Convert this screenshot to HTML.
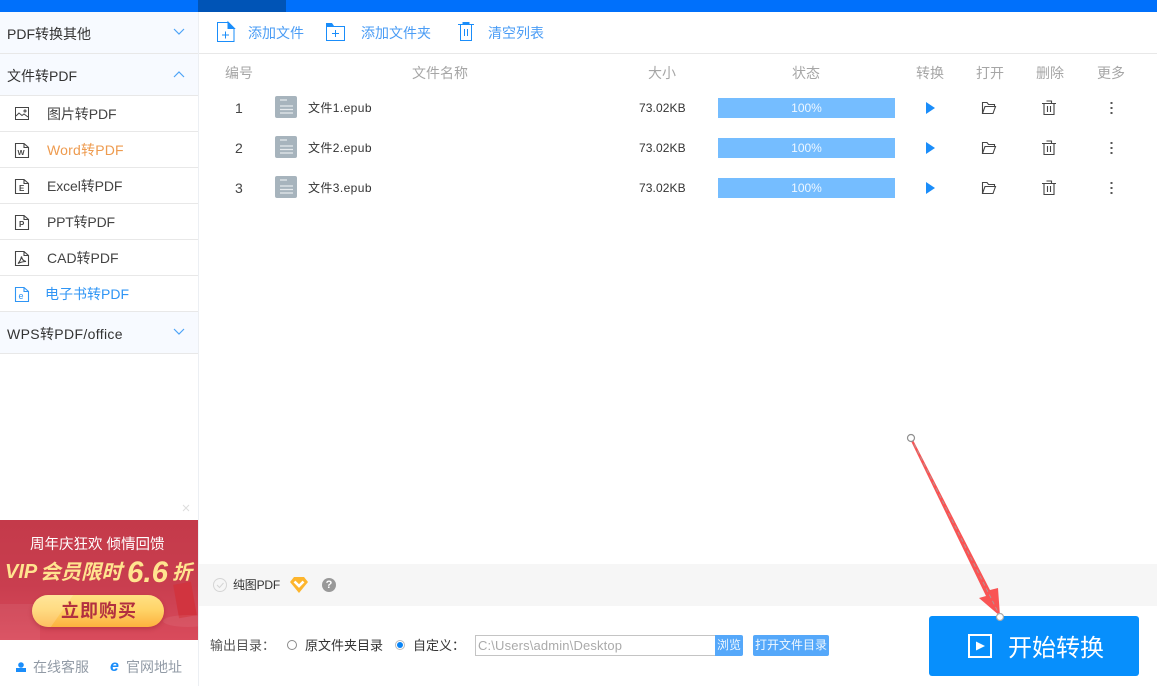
<!DOCTYPE html>
<html lang="zh"><head><meta charset="utf-8"><title>PDF转换</title>
<style>
*{box-sizing:border-box;margin:0;padding:0}
html,body{width:1157px;height:686px;overflow:hidden;background:#fff}
body{position:relative;font-family:"Liberation Sans","Noto Sans CJK SC",sans-serif;color:#333;font-size:14px}
.a{position:absolute;white-space:nowrap}
.sh{position:absolute;left:0;width:198px;height:42px;background:#f7faff;border-bottom:1px solid #e8e8e8}
.sh span{position:absolute;left:7px;top:12px;font-size:14px;line-height:20px;color:#333}
.si{position:absolute;left:0;width:198px;height:36px;background:#fff;border-bottom:1px solid #e8e8e8}
.si span{position:absolute;left:47px;top:9px;font-size:14px;line-height:18px;color:#444}
.si svg{position:absolute;left:15px;top:11px}
.h{position:absolute;top:64px;font-size:14px;line-height:18px;color:#a6a6a6;transform:translateX(-50%);white-space:nowrap}
.t{position:absolute;font-size:12px;line-height:16px;color:#333;white-space:nowrap}
.f{letter-spacing:.4px}
.bar{position:absolute;left:718px;width:177px;height:20px;background:#75bdff;color:#eef7ff;font-size:12px;line-height:21px;text-align:center}
.tb{position:absolute;top:24px;font-size:14px;line-height:18px;color:#4a9cf5;white-space:nowrap}
svg{position:absolute;overflow:visible}
</style></head><body>
<div class="a" style="left:0;top:0;width:1157px;height:12px;background:#0070fb"></div>
<div class="a" style="left:198px;top:0;width:88px;height:12px;background:#0054b6"></div>
<div class="a" style="left:198px;top:12px;width:1px;height:674px;background:#eceff3"></div>

<div class="sh" style="top:12px"><span>PDF转换其他</span></div>
<svg style="left:173px;top:28px" width="12" height="8" fill="none" stroke="#4da3f7" stroke-width="1.2"><path d="M1 1l5 5 5-5"/></svg>
<div class="sh" style="top:54px"><span>文件转PDF</span></div>
<svg style="left:173px;top:70px" width="12" height="8" fill="none" stroke="#4da3f7" stroke-width="1.2"><path d="M1 7l5-5 5 5"/></svg>

<div class="si" style="top:96px"><svg width="14" height="14" fill="none" stroke="#444" stroke-width="1"><rect x=".5" y=".5" width="13" height="12"/><path d="M1 9l3-3 3 2.500 2-1.500 4 3"/><circle cx="10" cy="4" r="1"/></svg><span style="letter-spacing:-.1px">图片转PDF</span></div>
<div class="si" style="top:132px"><svg width="14" height="15" fill="none" stroke="#444" stroke-width="1.100"><path d="M.5.500h8.500l4.500 4v10h-13zM9 .5v4h4.500"/><text x="2.500" y="12" font-size="7.500" font-weight="700" fill="#444" stroke="none" font-family="Liberation Sans">W</text></svg><span style="color:#ee9b4f;letter-spacing:.2px">Word转PDF</span></div>
<div class="si" style="top:168px"><svg width="14" height="15" fill="none" stroke="#444" stroke-width="1.100"><path d="M.5.500h8.500l4.500 4v10h-13zM9 .5v4h4.500"/><text x="4" y="12" font-size="8" font-weight="700" fill="#444" stroke="none" font-family="Liberation Sans">E</text></svg><span style="letter-spacing:-.1px">Excel转PDF</span></div>
<div class="si" style="top:204px"><svg width="14" height="15" fill="none" stroke="#444" stroke-width="1.100"><path d="M.5.500h8.500l4.500 4v10h-13zM9 .5v4h4.500"/><text x="4" y="12" font-size="8" font-weight="700" fill="#444" stroke="none" font-family="Liberation Sans">P</text></svg><span style="letter-spacing:-.2px">PPT转PDF</span></div>
<div class="si" style="top:240px"><svg width="14" height="15" fill="none" stroke="#444" stroke-width="1.100"><path d="M.5.500h8.500l4.500 4v10h-13zM9 .5v4h4.500M3 12.500c2-2 3-4.500 3.500-7 .5 3 2 4.500 4.500 5-3 0-5 .5-8 2z"/></svg><span>CAD转PDF</span></div>
<div class="si" style="top:276px"><svg width="14" height="15" fill="none" stroke="#2f95f5" stroke-width="1.100"><path d="M.5.500h8.500l4.500 4v10h-13zM9 .5v4h4.500"/><text x="3.500" y="12" font-size="9" fill="#2f95f5" stroke="none" font-family="Liberation Sans">e</text></svg><span style="left:45px;color:#2f95f5">电子书转PDF</span></div>

<div class="sh" style="top:312px"><span style="letter-spacing:.35px">WPS转PDF/office</span></div>
<svg style="left:173px;top:328px" width="12" height="8" fill="none" stroke="#4da3f7" stroke-width="1.2"><path d="M1 1l5 5 5-5"/></svg>

<svg style="left:182px;top:504px" width="8" height="8" stroke="#ddd" stroke-width="1"><path d="M1 1l6 6M7 1l-6 6"/></svg>
<div class="a" style="left:0;top:520px;width:198px;height:120px;overflow:hidden;background:linear-gradient(180deg,#c43a4a 0%,#c93e4f 55%,#d94b5c 100%)">
 <div class="a" style="left:0;top:84px;width:40px;height:36px;background:rgba(255,255,255,.06)"></div>
 <div class="a" style="left:176px;top:63px;width:18px;height:34px;background:#d1343f;transform:rotate(-10deg)"></div>
 <div class="a" style="left:163px;top:95px;width:50px;height:12px;border-radius:50%;background:rgba(255,255,255,.07)"></div>
 <div class="a" style="left:30px;top:15px;font-size:14.500px;line-height:20px;color:#fff">周年庆狂欢 倾情回馈</div>
 <div class="a" style="left:5px;top:39px;font-size:20px;line-height:26px;font-weight:700;font-style:italic;color:#ffe48f">VIP</div>
 <div class="a" style="left:40px;top:40px;font-size:20.500px;line-height:26px;font-weight:700;font-style:italic;color:#ffe48f">会员限时</div>
 <div class="a" style="left:127px;top:38px;font-size:29.500px;line-height:30px;font-weight:700;font-style:italic;color:#ffe48f">6.6</div>
 <div class="a" style="left:172px;top:40px;font-size:20px;line-height:26px;font-weight:700;font-style:italic;color:#ffe48f">折</div>
 <div class="a" style="left:32px;top:75px;width:132px;height:32px;border-radius:16px;overflow:hidden;background:linear-gradient(180deg,#ffe184 0%,#ffd468 45%,#fdb23e 100%);box-shadow:0 2px 4px rgba(130,20,30,.3)">
  <div class="a" style="left:-20px;top:0;width:50px;height:32px;background:rgba(255,255,255,.18);transform:skewX(-35deg)"></div>
  <div class="a" style="left:29px;top:0;font-size:18px;line-height:32px;font-weight:700;color:#b23040;letter-spacing:1px">立即购买</div>
 </div>
</div>
<svg style="left:16px;top:662px" width="10" height="10"><circle cx="5" cy="3" r="2.800" fill="#1a8dfa"/><path d="M0 6h10v4H0z" fill="#1a8dfa"/></svg>
<div class="t" style="left:33px;top:658px;font-size:14px;line-height:18px;color:#929ba6">在线客服</div>
<div class="a" style="left:110px;top:658px;font-size:16px;font-weight:700;font-style:italic;color:#1a8dfa;line-height:18px">e</div>
<div class="t" style="left:126px;top:658px;font-size:14px;line-height:18px;color:#929ba6">官网地址</div>

<div class="a" style="left:199px;top:53px;width:958px;height:1px;background:#e8e8e8"></div>
<svg style="left:217px;top:22px" width="18" height="20" fill="none" stroke="#1a8dfa" stroke-width="1"><path d="M.5.500h10.500l6 6v13h-16.500z"/><path d="M11 0v6.500h6.500z" fill="#1a8dfa"/><path d="M5 13h7M8.500 9.500v7"/></svg>
<div class="tb" style="left:248px">添加文件</div>
<svg style="left:326px;top:23px" width="19" height="18" fill="none" stroke="#1a8dfa" stroke-width="1"><path d="M.5 3.500h18v14H.5z"/><path d="M0 0h6l2 3H0z" fill="#1a8dfa" stroke="none"/><path d="M6 10.500h7M9.500 7v7"/></svg>
<div class="tb" style="left:361px">添加文件夹</div>
<svg style="left:458px;top:22px" width="16" height="19" fill="none" stroke="#1a8dfa" stroke-width="1"><path d="M0 2.500h16M2.500 2.500v16h11v-16M6.500 7v7M9.500 7v7"/><path d="M4.500 0h7v2h-7z" fill="#1a8dfa" stroke="none"/></svg>
<div class="tb" style="left:488px">清空列表</div>

<div class="h" style="left:239px">编号</div>
<div class="h" style="left:440px">文件名称</div>
<div class="h" style="left:662px">大小</div>
<div class="h" style="left:806px">状态</div>
<div class="h" style="left:930px">转换</div>
<div class="h" style="left:990px">打开</div>
<div class="h" style="left:1050px">删除</div>
<div class="h" style="left:1111px">更多</div>

<!-- row 1 -->
<div class="t" style="left:235px;top:100px;font-size:14px;color:#444">1</div>
<svg style="left:275px;top:96px" width="22" height="22"><rect width="22" height="22" rx="2" fill="#a7b4bd"/><path d="M5 4h7M5 10h13M5 13.500h13M5 17h13" stroke="#e6eaed" stroke-width="1.300"/></svg>
<div class="t f" style="left:308px;top:100px">文件1.epub</div>
<div class="t" style="left:639px;top:100px;letter-spacing:.1px">73.02KB</div>
<div class="bar" style="top:98px">100%</div>
<svg style="left:926px;top:102px" width="9" height="12"><path d="M0 0l9 6-9 6z" fill="#1a8dfa"/></svg>
<svg style="left:982px;top:102px" width="14" height="12" fill="none" stroke="#444" stroke-width="1.100"><path d="M.5 11.500V.5h4.500l1.500 2h6v2M.5 11.500h10.500l2.500-7H3z"/></svg>
<svg style="left:1042px;top:101px" width="14" height="14" fill="none" stroke="#444" stroke-width="1.100"><path d="M0 2.500h14M4.500 0h5v2M2 2.500v11h10v-11M5.500 5v6M8.500 5v6"/></svg>
<svg style="left:1110px;top:102px" width="3" height="12" fill="#555"><rect x=".5" width="2" height="2"/><rect x=".5" y="5" width="2" height="2"/><rect x=".5" y="10" width="2" height="2"/></svg>

<!-- row 2 -->
<div class="t" style="left:235px;top:140px;font-size:14px;color:#444">2</div>
<svg style="left:275px;top:136px" width="22" height="22"><rect width="22" height="22" rx="2" fill="#a7b4bd"/><path d="M5 4h7M5 10h13M5 13.500h13M5 17h13" stroke="#e6eaed" stroke-width="1.300"/></svg>
<div class="t f" style="left:308px;top:140px">文件2.epub</div>
<div class="t" style="left:639px;top:140px;letter-spacing:.1px">73.02KB</div>
<div class="bar" style="top:138px">100%</div>
<svg style="left:926px;top:142px" width="9" height="12"><path d="M0 0l9 6-9 6z" fill="#1a8dfa"/></svg>
<svg style="left:982px;top:142px" width="14" height="12" fill="none" stroke="#444" stroke-width="1.100"><path d="M.5 11.500V.5h4.500l1.500 2h6v2M.5 11.500h10.500l2.500-7H3z"/></svg>
<svg style="left:1042px;top:141px" width="14" height="14" fill="none" stroke="#444" stroke-width="1.100"><path d="M0 2.500h14M4.500 0h5v2M2 2.500v11h10v-11M5.500 5v6M8.500 5v6"/></svg>
<svg style="left:1110px;top:142px" width="3" height="12" fill="#555"><rect x=".5" width="2" height="2"/><rect x=".5" y="5" width="2" height="2"/><rect x=".5" y="10" width="2" height="2"/></svg>

<!-- row 3 -->
<div class="t" style="left:235px;top:180px;font-size:14px;color:#444">3</div>
<svg style="left:275px;top:176px" width="22" height="22"><rect width="22" height="22" rx="2" fill="#a7b4bd"/><path d="M5 4h7M5 10h13M5 13.500h13M5 17h13" stroke="#e6eaed" stroke-width="1.300"/></svg>
<div class="t f" style="left:308px;top:180px">文件3.epub</div>
<div class="t" style="left:639px;top:180px;letter-spacing:.1px">73.02KB</div>
<div class="bar" style="top:178px">100%</div>
<svg style="left:926px;top:182px" width="9" height="12"><path d="M0 0l9 6-9 6z" fill="#1a8dfa"/></svg>
<svg style="left:982px;top:182px" width="14" height="12" fill="none" stroke="#444" stroke-width="1.100"><path d="M.5 11.500V.5h4.500l1.500 2h6v2M.5 11.500h10.500l2.500-7H3z"/></svg>
<svg style="left:1042px;top:181px" width="14" height="14" fill="none" stroke="#444" stroke-width="1.100"><path d="M0 2.500h14M4.500 0h5v2M2 2.500v11h10v-11M5.500 5v6M8.500 5v6"/></svg>
<svg style="left:1110px;top:182px" width="3" height="12" fill="#555"><rect x=".5" width="2" height="2"/><rect x=".5" y="5" width="2" height="2"/><rect x=".5" y="10" width="2" height="2"/></svg>

<!-- options strip -->
<div class="a" style="left:199px;top:564px;width:958px;height:42px;background:#f6f6f6"></div>
<svg style="left:213px;top:578px" width="14" height="14" fill="none" stroke="#d5d5d5" stroke-width="1"><circle cx="7" cy="7" r="6.500"/><path d="M4 7l2.500 2.500L10.500 5"/></svg>
<div class="t" style="left:233px;top:577px;letter-spacing:-.2px">纯图PDF</div>
<svg style="left:290px;top:577px" width="18" height="16"><path d="M4 0h10l4 5-9 11L0 5z" fill="#fdb52d"/><path d="M4.500 4.500L9 9l4.500-4.500" fill="none" stroke="#fff" stroke-width="2.600"/></svg>
<div class="a" style="left:322px;top:578px;width:14px;height:14px;border-radius:50%;background:#999;color:#fff;font-size:11px;font-weight:700;line-height:14px;text-align:center">?</div>

<!-- output row -->
<div class="t" style="left:210px;top:638px;font-size:13px;line-height:16px;color:#555">输出目录：</div>
<div class="a" style="left:287px;top:640px;width:10px;height:10px;border:1px solid #8a8a8a;border-radius:50%;background:#fff"></div>
<div class="t" style="left:305px;top:638px;font-size:13px;line-height:16px">原文件夹目录</div>
<div class="a" style="left:395px;top:640px;width:10px;height:10px;border:1px solid #bbb;border-radius:50%;background:#fff"></div>
<div class="a" style="left:397px;top:642px;width:6px;height:6px;border-radius:50%;background:#0a84f5"></div>
<div class="t" style="left:413px;top:638px;font-size:13px;line-height:16px">自定义：</div>
<div class="a" style="left:475px;top:635px;width:241px;height:21px;border:1px solid #c4c4c4;background:#fff;font-size:13px;line-height:20px;letter-spacing:.15px;color:#aaa;padding-left:2px">C:\Users\admin\Desktop</div>
<div class="a" style="left:715px;top:635px;width:28px;height:21px;background:#55a8fa;border-radius:0 2px 2px 0;color:#f0f8ff;font-size:12px;line-height:21px;text-align:center">浏览</div>
<div class="a" style="left:753px;top:635px;width:76px;height:21px;background:#55a8fa;border-radius:2px;color:#f0f8ff;font-size:12px;line-height:21px;text-align:center">打开文件目录</div>

<!-- start button -->
<div class="a" style="left:929px;top:616px;width:210px;height:60px;background:#078ffc;border-radius:3px"></div>
<svg style="left:968px;top:634px" width="24" height="24"><rect x="1" y="1" width="22" height="22" fill="none" stroke="#fff" stroke-width="2"/><path d="M8 7.500l9 4.500-9 4.500z" fill="#fff"/></svg>
<div class="a" style="left:1008px;top:633px;font-size:24px;line-height:32px;color:#fff">开始转换</div>

<!-- arrow -->
<svg style="left:0;top:0" width="1157" height="686"><path d="M910 439L912 438 990 590 998 588 1000 616 979 598 986 596z" fill="#f95454"/><path d="M911 438L1000 616" stroke="#a8a0a0" stroke-width=".8" stroke-dasharray="4 3" fill="none"/><circle cx="911" cy="438" r="3.500" fill="#fff" stroke="#8f8f8f" stroke-width="1.200"/><circle cx="1000" cy="617" r="3.500" fill="#fff" stroke="#aaa" stroke-width="1.200"/></svg>
</body></html>
